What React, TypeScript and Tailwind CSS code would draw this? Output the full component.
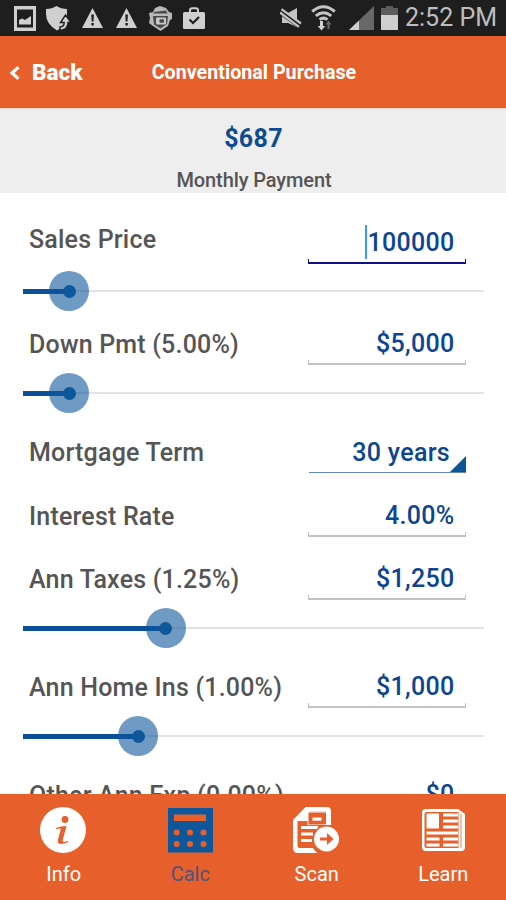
import { useState } from 'react'

type Campo = {
  label: string
  value: string
  fill?: number
  kind?: 'select'
}

const campos: Campo[] = [
  { label: 'Sales Price', value: '100000', fill: 46 },
  { label: 'Down Pmt (5.00%)', value: '$5,000', fill: 46 },
  { label: 'Mortgage Term', value: '30 years', kind: 'select' },
  { label: 'Interest Rate', value: '4.00%' },
  { label: 'Ann Taxes (1.25%)', value: '$1,250', fill: 142.5 },
  { label: 'Ann Home Ins (1.00%)', value: '$1,000', fill: 115 },
  { label: 'Other Ann Exp (0.00%)', value: '$0' },
]

function Triangle() {
  return (
    <svg width="21" height="20" viewBox="0 0 21 20">
      <path d="M10.5 0L21 20H0z" fill="#cfcfcf" />
      <path d="M9.300 6.500h2.600l-.4 7h-1.800zM9.400 15h2.400v2.400H9.400z" fill="#1e1e1e" />
    </svg>
  )
}

function StatusBar() {
  return (
    <header className="h-9 shrink-0 bg-[#1e1e1e] flex items-center justify-between pl-[14px] pr-[9px]">
      <div className="flex items-center">
        <svg width="22" height="25" viewBox="0 0 22 25">
          <path d="M0 0h22v25H0z" fill="#cfcfcf" />
          <path d="M3 3.500h16v18H3z" fill="#1e1e1e" />
          <path d="M5 18.500V14l3-1.500 3 1.500 6-4v8.500z" fill="#cfcfcf" />
        </svg>
        <svg className="ml-[10px]" width="25" height="25" viewBox="0 0 25 25">
          <path d="M0 3Q6 3 10.500 0 15 3 21 3v8q-1 7-6 11l-4 2.500Q0 18 0 8z" fill="#cfcfcf" />
          <path d="M19.500 9L25 16.500h-3c0 4.500-2.500 7.500-8 8v-3.500c3-.3 4.200-2 4.200-4.500h-3.700z" fill="#cfcfcf" stroke="#1e1e1e" strokeWidth="1.400" />
        </svg>
        <div className="ml-[11px] flex gap-[13px]">
          <Triangle />
          <Triangle />
        </div>
        <svg className="ml-[11px]" width="25" height="25" viewBox="0 0 25 25">
          <path d="M7 2l5-2 6 2 3 4 3 1v6l-2 1-2 6-7.500 5L5 20l-4-3 1-5-1-5 4-1z" fill="#b8b8b8" />
          <path d="M6 6L18 4.500l1.500 3H5zM5 10h15l-1 8-6.500 4.500L6 18.500z" fill="#4a4a4a" />
          <rect x="8" y="11.500" width="10" height="7" rx="1" fill="#c8c8c8" />
          <rect x="11.500" y="13.300" width="4.500" height="3.400" rx="1" fill="#4a4a4a" />
        </svg>
        <svg className="ml-[10px]" width="22" height="22" viewBox="0 0 22 22">
          <path d="M7 6V3.500Q7 1.200 9.200 1.200h3.600Q15 1.200 15 3.500V6" fill="none" stroke="#cfcfcf" strokeWidth="2" />
          <rect y="5" width="22" height="17" rx="1.500" fill="#cfcfcf" />
          <path d="M6.500 12.500l3.500 3.500 6-6" fill="none" stroke="#1e1e1e" strokeWidth="2.200" />
        </svg>
      </div>
      <div className="flex items-center">
        <svg width="22" height="20" viewBox="0 0 22 20">
          <path d="M2 5h6l9-5v19l-9-4H2z" fill="#c4c4c4" />
          <path d="M0 3l20.500 15" stroke="#1e1e1e" strokeWidth="6" />
          <path d="M1.500 1.200L21 15.500M0 4.500L19 18.800" stroke="#c4c4c4" strokeWidth="2.200" />
        </svg>
        <svg className="ml-[9px]" width="26" height="26" viewBox="0 0 26 26">
          <g fill="none" stroke="#c4c4c4" strokeWidth="3">
            <path d="M1.200 6.500Q12.500-3 23.800 6.500" />
            <path d="M4.800 10.800q7.700-6.200 15.400 0" />
            <path d="M8.500 14.600q4-3 8 0" />
          </g>
          <path d="M9 16h3v5h2.200l-3.700 4.500L6.800 21H9z" fill="#cfcfcf" />
          <path d="M17.500 15.500l3 4h-2v4.500h-2v-4.500h-2z" fill="#686868" />
        </svg>
        <svg className="ml-[12px]" width="25" height="24" viewBox="0 0 25 24">
          <path d="M25 0v24H0z" fill="#686868" />
          <path d="M10 14.400V24H0z" fill="#cfcfcf" />
        </svg>
        <svg className="ml-[7px]" width="17" height="24" viewBox="0 0 17 24">
          <path d="M5 0h7v2h5v22H0V2h5z" fill="#5d5d5d" />
          <path d="M0 9h17v15H0z" fill="#cfcfcf" />
        </svg>
        <span className="ml-[7px] text-[25px] leading-[38px] text-[#bdbdbd]">2:52 PM</span>
      </div>
    </header>
  )
}

function Field({ campo, focused, onFocus }: { campo: Campo; focused: boolean; onFocus: () => void }) {
  if (campo.kind === 'select') {
    return (
      <div className="w-[157px] h-[38px] border-b border-[#6288b5] flex items-end justify-end leading-[35px]">
        <span className="self-start">{campo.value}</span>
        <svg width="16" height="16" viewBox="0 0 16 16">
          <path d="M16 0v16H0z" fill="#0e5597" />
        </svg>
      </div>
    )
  }
  return (
    <div className="w-[158px] h-[38px] flex flex-col justify-between" onClick={onFocus}>
      <div className="flex justify-end pr-[11.500px] h-[33px] leading-[34px]">
        {focused && <span className="w-[2px] h-[34px] -mt-px bg-[#3a9bf2]" />}
        <span>{campo.value}</span>
      </div>
      <div className={focused
        ? 'h-[5px] shrink-0 border-x border-b-2 border-[#10108a]'
        : 'h-[5px] shrink-0 border-x border-b-2 border-[#c2c2c2]'} />
    </div>
  )
}

function Slider({ fill }: { fill: number }) {
  return (
    <div className="h-10 w-[461px] -ml-[6px] grid items-center">
      <div className="col-start-1 row-start-1 h-[2px] bg-[#e4e4e6]" />
      <div className="col-start-1 row-start-1 h-[5px] bg-[#0b4f96]" style={{ width: fill }} />
      <div className="col-start-1 row-start-1 flex">
        <div className="-mr-5" style={{ width: fill }} />
        <div className="size-10 shrink-0 rounded-full bg-[#0e579b]/60 flex items-center justify-center">
          <div className="size-[13px] rounded-full bg-[#0e579b]" />
        </div>
      </div>
    </div>
  )
}

function InfoIcon() {
  return (
    <svg width="46" height="46" viewBox="0 0 46 46">
      <circle cx="23" cy="23" r="23" fill="#fff" />
      <circle cx="25" cy="12.500" r="3.400" fill="#e75f2a" />
      <path d="M16 21q4.500-2 10.500-2l-3.800 14q-.4 2 1.200 2 1.800 0 4.400-1.200l-.4 1.400q-3.600 1.800-6.900 1.800-4.200 0-3-4.400l2.600-9.600q.4-1.600-1-1.600-1.600 0-3.900.8z" fill="#e75f2a" />
    </svg>
  )
}

function CalcIcon() {
  return (
    <svg width="46" height="46" viewBox="0 0 46 46">
      <path d="M1 1h45v44.500H1z" fill="#0e579b" />
      <path d="M7 7.500h32V14H7z" fill="#e75f2a" />
      <g fill="#e75f2a">
        <circle cx="9.700" cy="25.500" r="3" />
        <circle cx="23" cy="25.500" r="3" />
        <circle cx="36.500" cy="25.500" r="3" />
        <circle cx="9.700" cy="37" r="3" />
        <circle cx="23" cy="37" r="3" />
        <circle cx="36.500" cy="37" r="3" />
      </g>
    </svg>
  )
}

function ScanIcon() {
  return (
    <svg width="46" height="46" viewBox="0 0 46 46">
      <path d="M12.500 0H34q4 0 4 4v14H34V6q0-1.500-1.500-1.500H17V12q0 2-2 2H4.500v25q0 2 2 2H20q1.500 3 4.500 5H5q-5 0-5-5V13z" fill="#fff" />
      <path d="M14.500 4.500h20V18h-20z" fill="#fff" />
      <path d="M15.500 5.500h17.500v12H15.500z" fill="#e75f2a" />
      <path d="M19.500 10.500h9v3.200h-9z" fill="#fff" />
      <path d="M8 20.500h17M8 27h12M8 33.500h11" stroke="#fff" strokeWidth="3" />
      <circle cx="33.500" cy="32" r="14" fill="#e75f2a" />
      <circle cx="33.500" cy="32" r="12.500" fill="#fff" />
      <path d="M27 30.400h7v-4.400l6.500 6-6.500 6v-4.400h-7z" fill="#e75f2a" />
    </svg>
  )
}

function LearnIcon() {
  return (
    <svg width="46" height="46" viewBox="0 0 46 46">
      <path d="M6 2h32l7 5v33q0 4-4 4H6q-4 0-4-4V6q0-4 4-4z" fill="#fff" />
      <path d="M6.500 5h32v36h-32q-2 0-2-2V7q0-2 2-2z" fill="#e75f2a" />
      <path d="M41 7v34" stroke="#e75f2a" strokeWidth=".8" />
      <path d="M6.500 6.500H19v15H6.500z" fill="#fff" />
      <path d="M23 8h15M23 14h15M23 20h15M6.500 26h31.500M6.500 32h13M23 32h15M6.500 38h13M23 38h15" stroke="#fff" strokeWidth="3.200" />
    </svg>
  )
}

const tabs = [
  { name: 'Info', Icon: InfoIcon },
  { name: 'Calc', Icon: CalcIcon },
  { name: 'Scan', Icon: ScanIcon },
  { name: 'Learn', Icon: LearnIcon },
]

export default function App() {
  const [tab, setTab] = useState('Calc')
  const [foco, setFoco] = useState('Sales Price')

  return (
    <div className="w-[506px] h-[900px] flex flex-col overflow-hidden bg-white font-[Roboto,sans-serif]">
      <StatusBar />

      <div className="h-[72px] shrink-0 bg-[#e75f2a] text-white grid grid-cols-[1fr_auto_1fr] items-center">
        <button className="flex items-center gap-[12px] pl-[9px] pt-[2px] text-[22.500px] font-black">
          <svg width="11" height="14" viewBox="0 0 11 14">
            <path d="M9.500 1.300L3 7l6.500 5.700" fill="none" stroke="#fff" strokeWidth="3.200" />
          </svg>
          Back
        </button>
        <h1 className="text-[19.700px] font-bold pt-px pl-[2px]">Conventional Purchase</h1>
      </div>

      <div className="h-[85px] shrink-0 border-t border-[#f7d9cd] bg-[#eeeeee] flex flex-col items-center pt-[15px]">
        <div className="text-[25px] leading-[30px] font-bold tracking-[0.3px] pl-px text-[#0d4c92]">$687</div>
        <div className="mt-[14px] text-[20px] leading-6 font-medium pl-[2px] tracking-[-0.1px] text-[#555]">Monthly Payment</div>
      </div>

      <main className="flex-1 min-h-0 overflow-hidden pt-[33px] pl-[29px] pr-[40px]">
        {campos.map((c, i) => (
          <div key={c.label} className={c.fill ? (i === 0 ? 'h-[101px]' : 'h-[108px]') : 'h-[63.500px]'}>
            <div className="flex justify-between h-[38px] text-[25px] font-medium tracking-[0.3px] text-[#0d4590]">
              <label className={i === 0
                ? 'leading-[28px] tracking-[0.200px] text-[#555] whitespace-nowrap'
                : 'leading-[36px] tracking-[0.200px] text-[#555] whitespace-nowrap'}>{c.label}</label>
              <Field campo={c} focused={foco === c.label} onFocus={() => setFoco(c.label)} />
            </div>
            {c.fill && (
              <div className={i === 0 ? 'mt-[7px]' : 'mt-2'}>
                <Slider fill={c.fill} />
              </div>
            )}
          </div>
        ))}
      </main>

      <nav className="h-[106px] shrink-0 bg-[#e75f2a] grid grid-cols-4">
        {tabs.map(({ name, Icon }) => (
          <button key={name} onClick={() => setTab(name)}
            className={tab === name
              ? 'flex flex-col items-center pt-[13px] text-[#4a5580]'
              : 'flex flex-col items-center pt-[13px] text-white'}>
            <Icon />
            <span className="mt-[9px] pl-px text-[20px] leading-6">{name}</span>
          </button>
        ))}
      </nav>
    </div>
  )
}
